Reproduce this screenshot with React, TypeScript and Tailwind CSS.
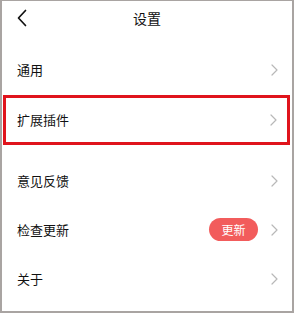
interface Row {
  label: string
  badge?: string
}

const groupA: Row[] = [{ label: '通用' }, { label: '扩展插件' }]
const groupB: Row[] = [{ label: '意见反馈' }, { label: '检查更新', badge: '更新' }, { label: '关于' }]

function Chevron() {
  return (
    <svg width="7" height="12" viewBox="0 0 7 12" fill="none" className="shrink-0">
      <path d="M1 1l5 5-5 5" stroke="#b8b8b8" strokeWidth="1.2" strokeLinecap="round" strokeLinejoin="round" />
    </svg>
  )
}

function SettingRow({ row }: { row: Row }) {
  return (
    <div className="flex h-[49px] items-center pl-[15px] pr-[14px]">
      <span className="flex-1 text-[13px] text-[#111]">{row.label}</span>
      {row.badge && (
        <span className="mr-[13px] flex h-[23px] w-[49px] items-center justify-center rounded-full bg-[#f25c5c] text-[12px] text-white">
          {row.badge}
        </span>
      )}
      <Chevron />
    </div>
  )
}

export default function App() {
  return (
    <div
      className="flex h-[313px] w-[294px] flex-col border-t border-r-2 border-b-2 border-l-2 border-[#a9a4a2] bg-white"
      style={{ fontFamily: '"Noto Sans CJK SC", "Noto Sans", sans-serif' }}
    >
      {/* Header */}
      <div className="relative flex h-[34px] items-center justify-center">
        <svg width="12" height="18" viewBox="0 0 12 18" fill="none" className="absolute left-[14px] top-[8px]">
          <path d="M9.5 1.5L2.5 9l7 7.5" stroke="#111" strokeWidth="1.7" strokeLinecap="round" strokeLinejoin="round" />
        </svg>
        <span className="text-[14px] text-[#111]">设置</span>
      </div>

      <div className="mt-[10px]">
        <SettingRow row={groupA[0]} />
        {/* highlighted row */}
        <div className="ml-[1px] mr-[2px] mt-[1px] flex h-[50px] items-center border-[3px] border-[#e0141c] pl-[11px] pr-[10px]">
          <span className="flex-1 text-[13px] text-[#111]">{groupA[1].label}</span>
          <Chevron />
        </div>
      </div>

      <div className="mt-[11px]">
        {groupB.map((row) => (
          <SettingRow key={row.label} row={row} />
        ))}
      </div>
    </div>
  )
}
